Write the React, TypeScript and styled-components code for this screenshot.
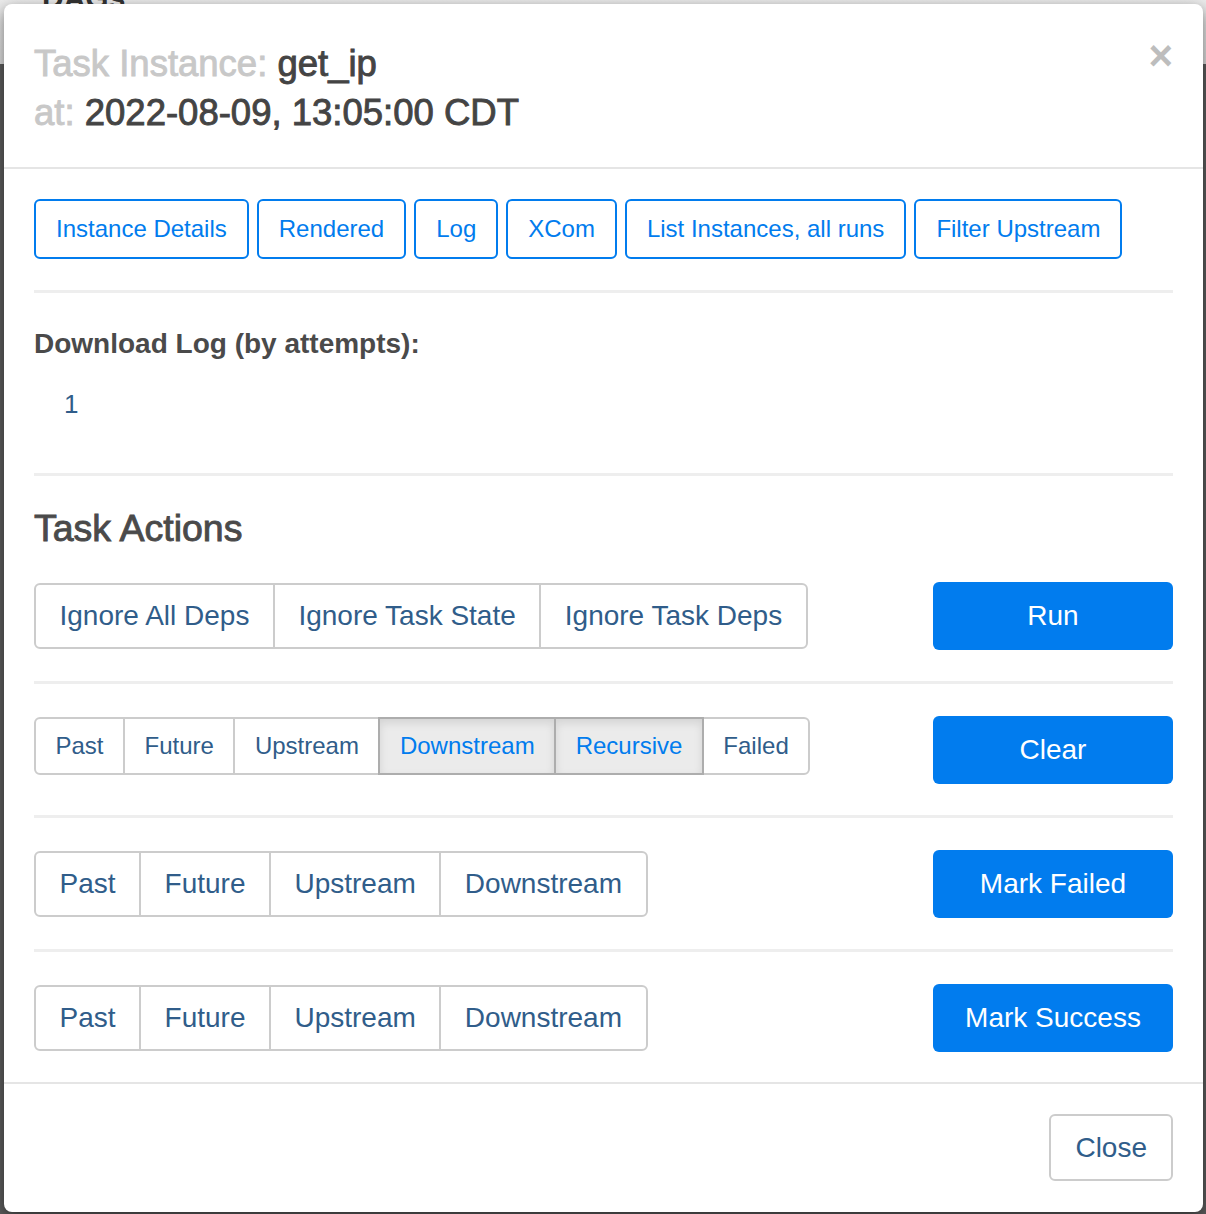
import React from 'react';
import styled, { createGlobalStyle, css } from 'styled-components';

const GlobalStyle = createGlobalStyle`
  html, body {
    margin: 0;
    padding: 0;
  }
  body {
    font-family: "Liberation Sans", Arial, Helvetica, sans-serif;
    background: #5d5d5d;
  }
  * {
    box-sizing: border-box;
  }
`;

const SLATE = '#305d8a';
const BLUE = '#017cee';

const Page = styled.div`
  position: relative;
  height: 1214px;
  overflow: hidden;
  display: flex;
  flex-direction: column;
`;

const PageNav = styled.div`
  height: 64px;
  background: linear-gradient(#ececec, #dedede);
  overflow: hidden;
`;

const NavText = styled.div`
  margin: -17px 0 0 42px;
  font-size: 30px;
  line-height: 30px;
  font-weight: 700;
  color: #333;
`;

const PageRest = styled.div`
  flex: 1;
  background: #5d5d5d;
`;

const Modal = styled.div`
  position: absolute;
  top: 4px;
  left: 4px;
  right: 3px;
  background: #fff;
  border-radius: 8px;
  box-shadow: 0 5px 15px rgba(0, 0, 0, 0.5);
  color: #4a4a4a;
`;

const Header = styled.div`
  display: flex;
  justify-content: space-between;
  align-items: flex-start;
  padding: 35px 30px 30px 30px;
  border-bottom: 2px solid #e5e5e5;
`;

// medium weight: regular face thickened a little
const TitleLine = styled.div`
  font-size: 36.5px;
  line-height: 49px;
  color: #444;
  -webkit-text-stroke: 0.9px currentColor;
`;

const Label = styled.span`
  color: #c8c8c8;
`;

const CloseX = styled.button`
  border: 0;
  background: none;
  padding: 0;
  margin-top: -4px;
  font-family: inherit;
  font-size: 42px;
  line-height: 42px;
  font-weight: 700;
  color: #bdbdbd;
  cursor: pointer;
`;

const Body = styled.div`
  display: flex;
  flex-direction: column;
  padding: 30px 30px;
`;

const LinkRow = styled.div`
  display: flex;
  gap: 8px;
`;

const LinkButton = styled.button`
  height: 60px;
  padding: 0 20px;
  border: 2px solid ${BLUE};
  border-radius: 6px;
  background: #fff;
  color: ${BLUE};
  font-family: inherit;
  font-size: 24px;
  cursor: pointer;
`;

const Rule = styled.hr`
  width: 100%;
  margin: 31px 0 32px;
  height: 0;
  border: 0;
  border-top: 3px solid #eeeeee;
`;

const SubHeading = styled.div`
  font-size: 28px;
  line-height: 37px;
  font-weight: 700;
  color: #4a4a4a;
`;

const AttemptList = styled.div`
  margin: 22px 0 18px;
  padding-left: 30px;
  font-size: 26px;
  line-height: 40px;
`;

const AttemptLink = styled.a`
  color: ${SLATE};
  text-decoration: none;
`;

const SectionTitle = styled.div`
  font-size: 37.5px;
  line-height: 40px;
  color: #4a4a4a;
  -webkit-text-stroke: 0.9px currentColor;
  margin-bottom: 34px;
`;

const ActionRow = styled.div`
  display: flex;
  justify-content: space-between;
  align-items: flex-start;
`;

const Group = styled.div`
  display: flex;
  margin-top: 1px;
`;

const Segment = styled.button<{ $small?: boolean; $active?: boolean }>`
  height: ${(p) => (p.$small ? '58px' : '66px')};
  padding: ${(p) => (p.$small ? '0 19.5px' : '0 23.5px')};
  font-size: ${(p) => (p.$small ? '24px' : '28px')};
  font-family: inherit;
  background: #fff;
  color: ${SLATE};
  border: 2px solid #cccccc;
  border-radius: 0;
  cursor: pointer;
  position: relative;

  & + & {
    margin-left: -2px;
  }
  &:first-child {
    border-radius: 6px 0 0 6px;
  }
  &:last-child {
    border-radius: 0 6px 6px 0;
  }

  ${(p) =>
    p.$active &&
    css`
      background: #ebebeb;
      border-color: #adadad;
      color: ${BLUE};
      box-shadow: inset 0 4px 8px rgba(0, 0, 0, 0.1);
      z-index: 1;
    `}
`;

const PrimaryButton = styled.button`
  width: 240px;
  height: 68px;
  border: 0;
  border-radius: 6px;
  background: ${BLUE};
  color: #fff;
  font-family: inherit;
  font-size: 28px;
  cursor: pointer;
`;

const Footer = styled.div`
  display: flex;
  justify-content: flex-end;
  padding: 30px 30px 31px;
  border-top: 2px solid #e5e5e5;
`;

const CloseButton = styled.button`
  height: 67px;
  padding: 0 24px;
  border: 2px solid #cccccc;
  border-radius: 6px;
  background: #fff;
  color: ${SLATE};
  font-family: inherit;
  font-size: 28px;
  cursor: pointer;
`;

interface Option {
  label: string;
  active?: boolean;
}

interface ActionProps {
  options: Option[];
  action: string;
  small?: boolean;
}

const Action: React.FC<ActionProps> = ({ options, action, small }) => (
  <ActionRow>
    <Group>
      {options.map((o) => (
        <Segment key={o.label} $small={small} $active={o.active}>
          {o.label}
        </Segment>
      ))}
    </Group>
    <PrimaryButton>{action}</PrimaryButton>
  </ActionRow>
);

const links = [
  'Instance Details',
  'Rendered',
  'Log',
  'XCom',
  'List Instances, all runs',
  'Filter Upstream',
];

const markOptions: Option[] = [
  { label: 'Past' },
  { label: 'Future' },
  { label: 'Upstream' },
  { label: 'Downstream' },
];

const App: React.FC = () => (
  <>
    <GlobalStyle />
    <Page>
      <PageNav>
        <NavText>DAGs</NavText>
      </PageNav>
      <PageRest />
      <Modal>
        <Header>
          <div>
            <TitleLine>
              <Label>Task Instance:</Label> get_ip
            </TitleLine>
            <TitleLine>
              <Label>at:</Label> 2022-08-09, 13:05:00 CDT
            </TitleLine>
          </div>
          <CloseX aria-label="Close">×</CloseX>
        </Header>
        <Body>
          <LinkRow>
            {links.map((l) => (
              <LinkButton key={l}>{l}</LinkButton>
            ))}
          </LinkRow>
          <Rule />
          <SubHeading>Download Log (by attempts):</SubHeading>
          <AttemptList>
            <AttemptLink href="#">1</AttemptLink>
          </AttemptList>
          <Rule />
          <SectionTitle>Task Actions</SectionTitle>
          <Action
            options={[
              { label: 'Ignore All Deps' },
              { label: 'Ignore Task State' },
              { label: 'Ignore Task Deps' },
            ]}
            action="Run"
          />
          <Rule />
          <Action
            small
            options={[
              { label: 'Past' },
              { label: 'Future' },
              { label: 'Upstream' },
              { label: 'Downstream', active: true },
              { label: 'Recursive', active: true },
              { label: 'Failed' },
            ]}
            action="Clear"
          />
          <Rule />
          <Action options={markOptions} action="Mark Failed" />
          <Rule />
          <Action options={markOptions} action="Mark Success" />
        </Body>
        <Footer>
          <CloseButton>Close</CloseButton>
        </Footer>
      </Modal>
    </Page>
  </>
);

export default App;
